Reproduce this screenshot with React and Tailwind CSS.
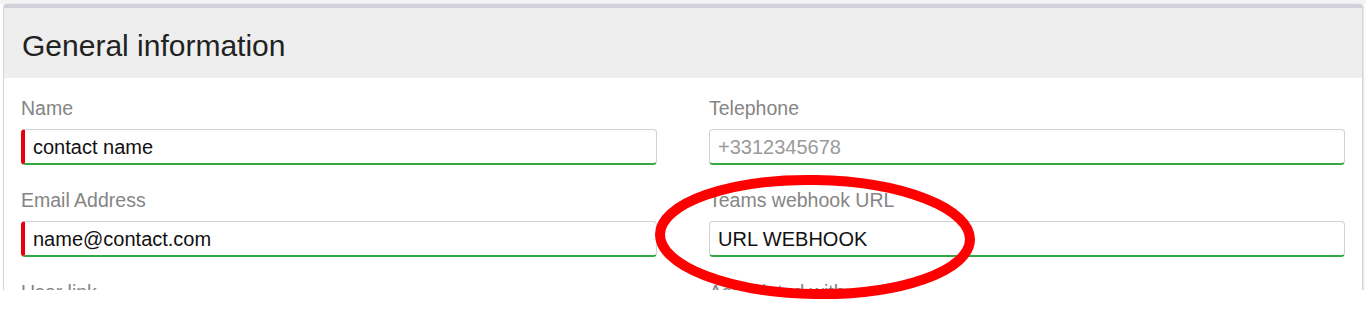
const FONT = { fontFamily: '"Liberation Sans", Arial, sans-serif' };

function Field({ label, value, placeholder, required }) {
  return (
    <div className="flex flex-col">
      <label className="mb-[9px] text-[19.5px] leading-[24px] text-[#858585]">{label}</label>
      <div
        className={
          'flex h-[36px] items-center rounded-[4px] border border-b-2 border-[#d2d2d2] border-b-[#35a843] bg-white pl-[8px] text-[20px] ' +
          (required ? 'border-l-4 border-l-[#e8000b]' : 'pl-[8px]')
        }
      >
        {value ? (
          <span className="text-[#111]">{value}</span>
        ) : (
          <span className="text-[#9a9a9a]">{placeholder}</span>
        )}
      </div>
    </div>
  );
}

export default function App() {
  return (
    <div className="relative h-[310px] w-full overflow-hidden bg-white" style={FONT}>
      <div className="h-[290px] overflow-hidden">
        <div className="h-[4px] bg-[#f3f3f5]" />
        <div className="mx-[3px] rounded-t-[4px] border-x border-t-4 border-[#d6d6d8] border-t-[#d0d0d8] bg-white shadow-[1px_0_2px_rgba(0,0,0,0.12)]">
          <div className="bg-[#eeeeee] px-[18px] pt-[20px] pb-[14px]">
            <h2 className="text-[30px] leading-[36px] text-[#222]">General information</h2>
          </div>
          <div className="grid grid-cols-2 gap-x-[52px] gap-y-[23px] px-[17px] pt-[18px] pb-[20px]">
            <Field label="Name" value="contact name" required />
            <Field label="Telephone" placeholder="+3312345678" />
            <Field label="Email Address" value="name@contact.com" required />
            <Field label="Teams webhook URL" value="URL WEBHOOK" />
            <Field label="User link" placeholder="" />
            <Field label="Associated with" placeholder="" />
          </div>
        </div>
      </div>

      {/* red highlight circle drawn over the form */}
      <svg className="pointer-events-none absolute left-0 top-0" width="1366" height="310">
        <ellipse
          cx="815"
          cy="237"
          rx="155"
          ry="57"
          fill="none"
          stroke="#ff0000"
          strokeWidth="10"
          transform="rotate(1 815 237)"
        />
      </svg>
    </div>
  );
}
